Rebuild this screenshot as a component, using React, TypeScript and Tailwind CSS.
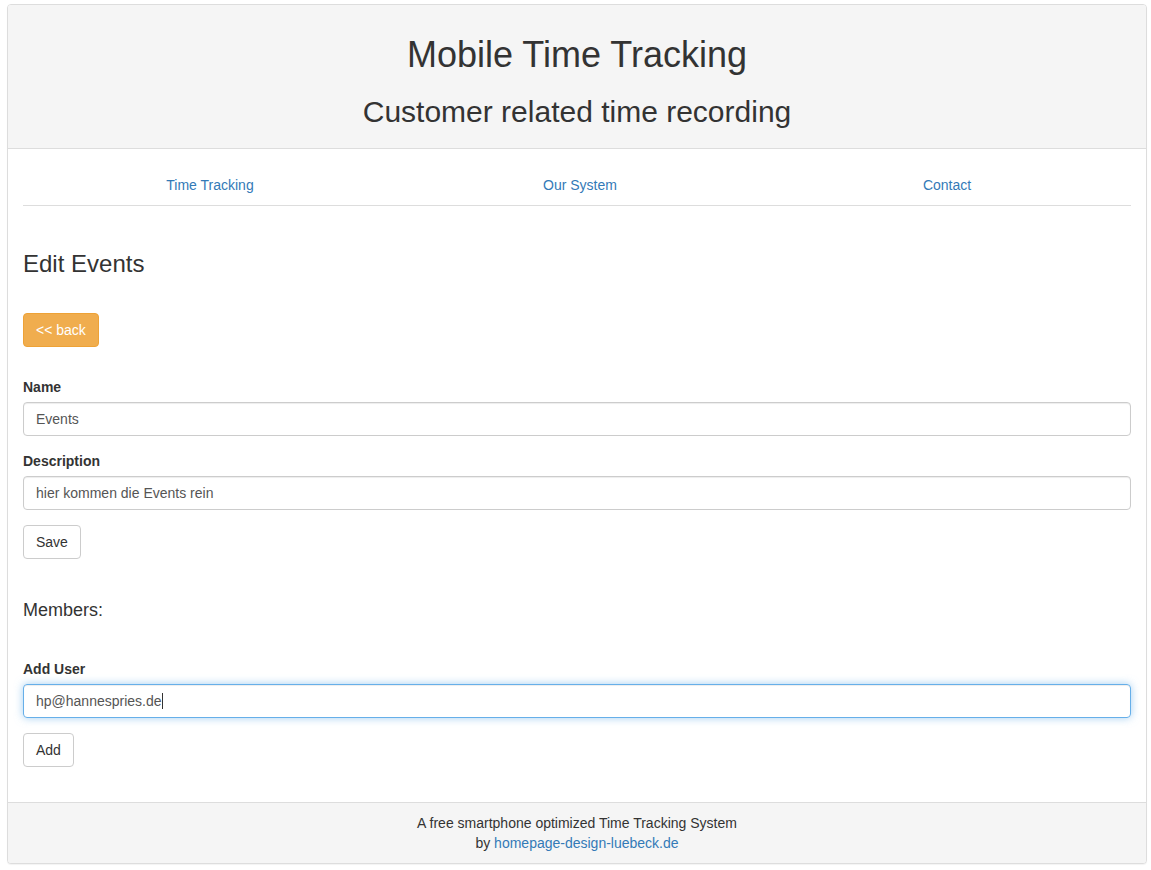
import React from "react";

const font = { fontFamily: '"Liberation Sans", Arial, Helvetica, sans-serif' };

export default function App() {
  return (
    <div className="bg-white text-[#333] text-[14px] leading-[20px] pt-[4px] pl-[7px] pr-[4px] pb-[6px]" style={font}>
      <div className="border border-[#ddd] rounded-[4px] shadow-[0_1px_1px_rgba(0,0,0,0.05)] bg-white">
        <div className="bg-[#f5f5f5] border-b border-[#ddd] rounded-t-[3px] px-[15px] pt-[10px] pb-[10px] text-center">
          <h1 className="mt-[20px] text-[36px] leading-[39.6px] font-medium">Mobile Time Tracking</h1>
          <h2 className="mt-[20px] mb-[10px] text-[30px] leading-[33px] font-medium">Customer related time recording</h2>
        </div>
        <div className="px-[15px] pt-[16px] pb-[35px]">
          <nav className="flex border-b border-[#ddd]">
            <a href="#" className="w-[374px] shrink-0 text-center py-[10px] text-[#337ab7] leading-[20px]">Time Tracking</a>
            <a href="#" className="w-[366px] shrink-0 text-center py-[10px] text-[#337ab7] leading-[20px]">Our System</a>
            <a href="#" className="flex-1 text-center py-[10px] text-[#337ab7] leading-[20px]">Contact</a>
          </nav>
          <h3 className="mt-[45px] text-[24px] leading-[26.4px] font-medium">Edit Events</h3>
          <button className="mt-[36px] bg-[#f0ad4e] border border-[#eea236] text-white rounded-[4px] px-[12px] py-[6px] leading-[20px] text-[14px] block">
            &lt;&lt; back
          </button>
          <div className="mt-[30px]">
            <label className="block font-bold mb-[5px]">Name</label>
            <input
              readOnly
              value="Events"
              className="block w-full h-[34px] px-[12px] py-[6px] border border-[#ccc] rounded-[4px] text-[#555] text-[14px] shadow-[inset_0_1px_1px_rgba(0,0,0,0.075)] outline-none"
              style={font}
            />
          </div>
          <div className="mt-[15px]">
            <label className="block font-bold mb-[5px]">Description</label>
            <input
              readOnly
              value="hier kommen die Events rein"
              className="block w-full h-[34px] px-[12px] py-[6px] border border-[#ccc] rounded-[4px] text-[#555] text-[14px] shadow-[inset_0_1px_1px_rgba(0,0,0,0.075)] outline-none"
              style={font}
            />
          </div>
          <button className="mt-[15px] bg-white border border-[#ccc] text-[#333] rounded-[4px] px-[12px] py-[6px] leading-[20px] text-[14px] block">
            Save
          </button>
          <h4 className="mt-[42px] text-[18px] leading-[19.8px] font-medium">Members:</h4>
          <div className="mt-[38px]">
            <label className="block font-bold mb-[5px]">Add User</label>
            <div className="relative h-[34px] px-[12px] py-[6px] border border-[#66afe9] rounded-[4px] text-[#555] text-[14px] leading-[20px] shadow-[inset_0_1px_1px_rgba(0,0,0,0.075),0_0_8px_rgba(102,175,233,0.6)] flex items-center">
              <span>hp@hannespries.de</span>
              <span className="inline-block w-[1px] h-[16px] bg-[#333]" />
            </div>
          </div>
          <button className="mt-[15px] bg-white border border-[#ccc] text-[#333] rounded-[4px] px-[12px] py-[6px] leading-[20px] text-[14px] block">
            Add
          </button>
        </div>
        <div className="bg-[#f5f5f5] border-t border-[#ddd] rounded-b-[3px] px-[15px] py-[10px] text-center leading-[20px]">
          <div>A free smartphone optimized Time Tracking System</div>
          <div>
            by <a href="#" className="text-[#337ab7]">homepage-design-luebeck.de</a>
          </div>
        </div>
      </div>
    </div>
  );
}
